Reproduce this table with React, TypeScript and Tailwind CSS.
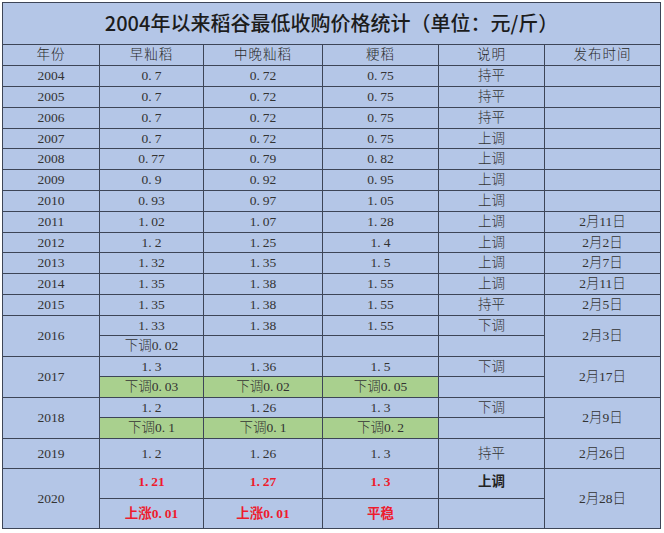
import React from 'react';

type Row = [string, string, string, string, string, string];

const rows: Row[] = [
  ['2004', '0.7', '0.72', '0.75', '持平', ''],
  ['2005', '0.7', '0.72', '0.75', '持平', ''],
  ['2006', '0.7', '0.72', '0.75', '持平', ''],
  ['2007', '0.7', '0.72', '0.75', '上调', ''],
  ['2008', '0.77', '0.79', '0.82', '上调', ''],
  ['2009', '0.9', '0.92', '0.95', '上调', ''],
  ['2010', '0.93', '0.97', '1.05', '上调', ''],
  ['2011', '1.02', '1.07', '1.28', '上调', '2月11日'],
  ['2012', '1.2', '1.25', '1.4', '上调', '2月2日'],
  ['2013', '1.32', '1.35', '1.5', '上调', '2月7日'],
  ['2014', '1.35', '1.38', '1.55', '上调', '2月11日'],
  ['2015', '1.35', '1.38', '1.55', '持平', '2月5日'],
];

// row heights so the grid lines land where the sheet has them
const heights = [21, 21, 21, 20, 21, 21, 21, 21, 20, 21, 21, 21];

// SimSun-style wide period
function Num({ v }: { v: string }) {
  const parts = v.split('.');
  if (parts.length < 2) return <>{v}</>;
  return (
    <>
      {parts[0]}
      <span className="pr-[3px]">.</span>
      {parts[1]}
    </>
  );
}

const cell = 'border border-[#3d4557] text-center align-middle p-0 leading-none';
const green = 'bg-[#a9d08e]';
const red = 'text-[#ee1c2e] font-bold';

export default function App() {
  return (
    <div className="w-[664px] h-[533px] bg-white pt-[2px] pl-[2px] overflow-hidden font-['Liberation_Serif','Noto_Sans_CJK_SC',serif] text-[13.5px] font-light text-[#333]">
      <table className="table-fixed border-collapse w-[658px] bg-[#b4c6e7]">
        <colgroup>
          <col className="w-[97px]" />
          <col className="w-[104px]" />
          <col className="w-[119px]" />
          <col className="w-[116px]" />
          <col className="w-[106px]" />
          <col className="w-[116px]" />
        </colgroup>
        <tbody>
          <tr className="h-[42px]">
            <td colSpan={6} className={`${cell} font-['Noto_Sans_CJK_SC',sans-serif] text-[20px] font-medium text-[#1c1c1c] pb-[2px]`}>
              2004年以来稻谷最低收购价格统计（单位：元/斤）
            </td>
          </tr>
          <tr className="h-[21px] tracking-[1px] text-[#2a2a2a]">
            <td className={cell}>年份</td>
            <td className={cell}>早籼稻</td>
            <td className={cell}>中晚籼稻</td>
            <td className={cell}>粳稻</td>
            <td className={cell}>说明</td>
            <td className={cell}>发布时间</td>
          </tr>
          {rows.map((r, i) => (
            <tr key={r[0]} style={{ height: heights[i] }}>
              <td className={cell}>{r[0]}</td>
              <td className={cell}><Num v={r[1]} /></td>
              <td className={cell}><Num v={r[2]} /></td>
              <td className={cell}><Num v={r[3]} /></td>
              <td className={cell}>{r[4]}</td>
              <td className={cell}>{r[5]}</td>
            </tr>
          ))}

          {/* 2016 */}
          <tr className="h-[20px]">
            <td rowSpan={2} className={cell}>2016</td>
            <td className={cell}><Num v="1.33" /></td>
            <td className={cell}><Num v="1.38" /></td>
            <td className={cell}><Num v="1.55" /></td>
            <td className={cell}>下调</td>
            <td rowSpan={2} className={cell}>2月3日</td>
          </tr>
          <tr className="h-[21px]">
            <td className={cell}>下调<Num v="0.02" /></td>
            <td className={cell}></td>
            <td className={cell}></td>
            <td className={cell}></td>
          </tr>

          {/* 2017 */}
          <tr className="h-[20px]">
            <td rowSpan={2} className={cell}>2017</td>
            <td className={cell}><Num v="1.3" /></td>
            <td className={cell}><Num v="1.36" /></td>
            <td className={cell}><Num v="1.5" /></td>
            <td className={cell}>下调</td>
            <td rowSpan={2} className={cell}>2月17日</td>
          </tr>
          <tr className="h-[21px]">
            <td className={`${cell} ${green}`}>下调<Num v="0.03" /></td>
            <td className={`${cell} ${green}`}>下调<Num v="0.02" /></td>
            <td className={`${cell} ${green}`}>下调<Num v="0.05" /></td>
            <td className={cell}></td>
          </tr>

          {/* 2018 */}
          <tr className="h-[20px]">
            <td rowSpan={2} className={cell}>2018</td>
            <td className={cell}><Num v="1.2" /></td>
            <td className={cell}><Num v="1.26" /></td>
            <td className={cell}><Num v="1.3" /></td>
            <td className={cell}>下调</td>
            <td rowSpan={2} className={cell}>2月9日</td>
          </tr>
          <tr className="h-[21px]">
            <td className={`${cell} ${green}`}>下调<Num v="0.1" /></td>
            <td className={`${cell} ${green}`}>下调<Num v="0.1" /></td>
            <td className={`${cell} ${green}`}>下调<Num v="0.2" /></td>
            <td className={cell}></td>
          </tr>

          <tr className="h-[30px]">
            <td className={cell}>2019</td>
            <td className={cell}><Num v="1.2" /></td>
            <td className={cell}><Num v="1.26" /></td>
            <td className={cell}><Num v="1.3" /></td>
            <td className={cell}>持平</td>
            <td className={cell}>2月26日</td>
          </tr>

          {/* 2020 */}
          <tr className="h-[30px]">
            <td rowSpan={2} className={cell}>2020</td>
            <td className={`${cell} ${red} pb-[4px]`}><Num v="1.21" /></td>
            <td className={`${cell} ${red} pb-[4px]`}><Num v="1.27" /></td>
            <td className={`${cell} ${red} pb-[4px]`}><Num v="1.3" /></td>
            <td className={`${cell} font-bold text-[#222] pb-[4px]`}>上调</td>
            <td rowSpan={2} className={cell}>2月28日</td>
          </tr>
          <tr className="h-[30px]">
            <td className={`${cell} ${red}`}>上涨<Num v="0.01" /></td>
            <td className={`${cell} ${red}`}>上涨<Num v="0.01" /></td>
            <td className={`${cell} ${red}`}>平稳</td>
            <td className={cell}></td>
          </tr>
        </tbody>
      </table>
    </div>
  );
}
